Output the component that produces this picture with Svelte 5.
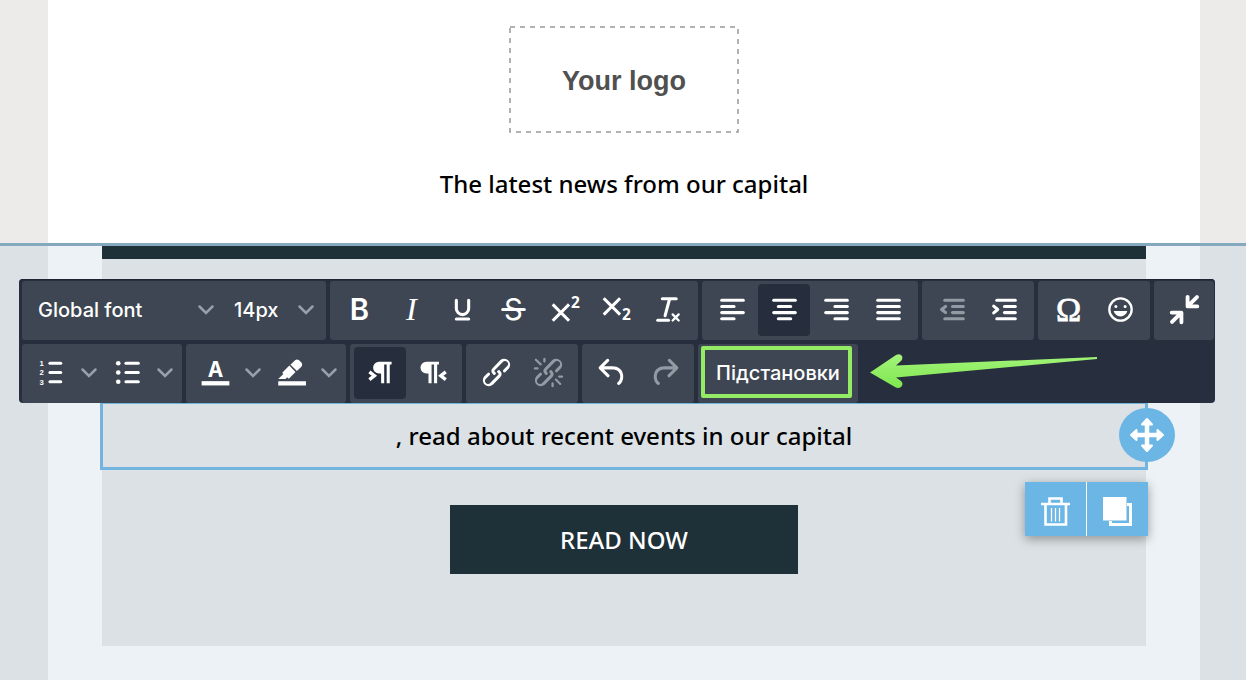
<script>
  const bar = (x1, x2, y) => `<path d="M${x1} ${y}H${x2}" />`;
  const stroked = (content) =>
    `<g fill="none" stroke="currentColor" stroke-width="2" stroke-linecap="round" stroke-linejoin="round">${content}</g>`;
  const glyph = (char, x, y, size, family = "Inter, sans-serif", weight = 400, style = "normal") =>
    `<text x="${x}" y="${y}" font-size="${size}" font-family="${family}" font-weight="${weight}" font-style="${style}" text-anchor="middle">${char}</text>`;

  const chain =
    '<path d="M6.2 12.3a1 1 0 0 1 1.4 1.4l-2.1 2a2 2 0 1 0 2.7 2.8l4.8-4.8a1 1 0 0 0 0-1.4 1 1 0 1 1 1.4-1.3 2.9 2.9 0 0 1 0 4L9.6 20a3.9 3.9 0 0 1-5.5-5.5l2-2zm11.6-.6a1 1 0 0 1-1.4-1.4l2-2a2 2 0 1 0-2.6-2.8L11 10.3a1 1 0 0 0 0 1.4A1 1 0 1 1 9.6 13a2.9 2.9 0 0 1 0-4L14.4 4a3.9 3.9 0 0 1 5.5 5.5l-2 2z" />';
  const undo =
    '<path d="M6.4 8H12c3.7 0 6.2 2 6.8 5.1.6 2.7-.4 5.6-2.3 6.8a1 1 0 0 1-1-1.8c1.1-.6 1.8-2.7 1.4-4.6-.5-2.1-2.1-3.5-4.9-3.5H6.4l3.3 3.3a1 1 0 1 1-1.4 1.4l-5-5a1 1 0 0 1 0-1.4l5-5a1 1 0 0 1 1.4 1.4L6.4 8z" />';
  const pilcrow = "M11 5h8.2v1.8H18V19h-2V6.8h-1.6V19h-2v-6.4H11a3.8 3.8 0 0 1 0-7.6z";

  const icons = {
    bold: glyph("B", 12, 18.8, 19, "Inter, sans-serif", 600),
    italic: glyph("I", 12, 18.8, 21, "Liberation Serif, serif", 400, "italic"),
    underline: stroked('<path d="M8 6v5.3a4 4 0 0 0 8 0V6" />' + bar(8, 16, 18.2)),
    strike: glyph("S", 12, 18.8, 19, "Inter, sans-serif") + stroked(bar(5, 19, 12)),
    superscript:
      '<path d="M15 9.4 10.4 14l4.6 4.6-1.4 1.4L9 15.4 4.4 20 3 18.6 7.6 14 3 9.4 4.4 8 9 12.6 13.6 8z" />' +
      glyph("2", 18.4, 11, 10, "Open Sans, sans-serif", 700),
    subscript:
      '<path d="m10.4 10 4.6 4.6-1.4 1.4L9 11.4 4.4 16 3 14.6 7.6 10 3 5.4 4.4 4 9 8.6 13.6 4 15 5.4z" />' +
      glyph("2", 18.5, 19, 10, "Open Sans, sans-serif", 700),
    clear: stroked(
      bar(8, 17, 5) +
        bar(5, 12, 19) +
        '<path d="M12.6 5.5 9.8 16" /><path d="m14.7 15.2 3.9 3.9m0-3.9-3.9 3.9" stroke-width="1.5" />'
    ),
    left: stroked(bar(5, 19, 6) + bar(5, 13, 10) + bar(5, 19, 14) + bar(5, 13, 18)),
    center: stroked(bar(5, 19, 6) + bar(8, 16, 10) + bar(5, 19, 14) + bar(8, 16, 18)),
    right: stroked(bar(5, 19, 6) + bar(11, 19, 10) + bar(5, 19, 14) + bar(11, 19, 18)),
    justify: stroked(bar(5, 19, 6) + bar(5, 19, 10) + bar(5, 19, 14) + bar(5, 19, 18)),
    outdent: stroked(
      bar(7, 19, 6) + bar(12, 19, 10) + bar(12, 19, 14) + bar(7, 19, 18) + '<path d="m7.5 10-2.6 2 2.6 2" />'
    ),
    indent: stroked(
      bar(7, 19, 6) + bar(12, 19, 10) + bar(12, 19, 14) + bar(7, 19, 18) + '<path d="m5 9.8 2.6 2.2L5 14.2" />'
    ),
    omega: `<g stroke="currentColor" stroke-width="0.5">${glyph("Ω", 12, 19.5, 22, "Liberation Serif, serif")}</g>`,
    smile:
      '<path d="M9 11a1 1 0 1 0 0-2 1 1 0 0 0 0 2zm6 0a1 1 0 1 0 0-2 1 1 0 0 0 0 2zm-3 5.5c2.1 0 4-1.5 4.4-3.5H7.6c.5 2 2.3 3.5 4.4 3.5zM12 4a8 8 0 1 0 0 16 8 8 0 0 0 0-16zm0 14.5a6.5 6.5 0 1 1 0-13 6.5 6.5 0 0 1 0 13z" />',
    collapse:
      '<path d="M14 3.8V10h6.3M14.5 9.5l5.6-5.6M3.7 14H10v6.3M9.5 14.5l-5.6 5.6" fill="none" stroke="currentColor" stroke-width="2.5" stroke-linecap="round" stroke-linejoin="round" />',
    ordered:
      stroked(bar(11, 18, 6) + bar(11, 18, 12) + bar(11, 18, 18)) +
      glyph("1", 5.6, 7.8, 5, "Liberation Sans, sans-serif", 700) +
      glyph("2", 5.6, 13.8, 5, "Liberation Sans, sans-serif", 700) +
      glyph("3", 5.6, 19.8, 5, "Liberation Sans, sans-serif", 700),
    bullets:
      stroked(bar(11, 19, 6) + bar(11, 19, 12) + bar(11, 19, 18)) +
      '<circle cx="6" cy="6" r="1.5" /><circle cx="6" cy="12" r="1.5" /><circle cx="6" cy="18" r="1.5" />',
    color: glyph("A", 12, 15.2, 13.5, "Inter, sans-serif", 700) + '<path d="M3 17.6h18v2.8H3z" />',
    highlight:
      '<path d="M3 17.6h18v2.8H3zM7.7 16.2H3l3.3-3.3-.7-.8 4.6-4.6 4 4.1-4 4.2c-.2.2-.6.2-.8 0l-.6-.7zM12.3 8.3 10.9 7l3-2.9a2 2 0 0 1 2.6 0L18 5.5c.7.7.7 2 0 2.7l-2.9 2.9z" transform="translate(.4)" />',
    ltr:
      `<path d="${pilcrow}" />` +
      '<path d="m4.8 11.600 3.200 2.500-3.200 2.500" fill="none" stroke="currentColor" stroke-width="2.2" />',
    rtl:
      `<path d="${pilcrow}" transform="translate(-3)" />` +
      '<path d="m20.600 11.600-3.200 2.500 3.200 2.500" fill="none" stroke="currentColor" stroke-width="2.2" />',
    link: chain,
    unlink:
      chain +
      '<path d="M7.6 6.3a.8.8 0 0 1-1 1.1L3.3 4.2a.7.7 0 1 1 1-1zM5.1 8.6a.8.8 0 0 1 0 1.5H3a.8.8 0 0 1 0-1.5zm5-3.5a.8.8 0 0 1-1.5 0V3a.8.8 0 0 1 1.5 0zm6 11.8a.8.8 0 0 1 1-1l3.2 3.2a.8.8 0 0 1-1 1zm-2.2 2a.8.8 0 0 1 1.5 0V21a.8.8 0 0 1-1.5 0zm5-3.5a.7.7 0 1 1 0-1.5H21a.8.8 0 0 1 0 1.5z" />',
    undo,
    redo: `<g transform="matrix(-1 0 0 1 24 0)">${undo}</g>`,
  };

  const formats = [
    ["bold", "Bold"],
    ["italic", "Italic"],
    ["underline", "Underline"],
    ["strike", "Strikethrough"],
    ["superscript", "Superscript"],
    ["subscript", "Subscript"],
    ["clear", "Clear formatting"],
  ];
  const alignments = ["left", "center", "right", "justify"];

  let align = $state("center");
  let direction = $state("ltr");
  let font = $state("Global font");
  let size = $state("14px");
</script>

{#snippet icon(name)}
  <svg class="icon" viewBox="0 0 24 24" aria-hidden="true">{@html icons[name]}</svg>
{/snippet}

{#snippet chevron()}
  <svg class="chevron" viewBox="0 0 18 12" aria-hidden="true">
    <path d="M2.5 2.5 9 9l6.5-6.5" />
  </svg>
{/snippet}

{#snippet tool(name, label, disabled = false)}
  <button type="button" class="tool" aria-label={label} {disabled}>{@render icon(name)}</button>
{/snippet}

{#snippet split(name, label)}
  <button type="button" class="tool split-main" aria-label={label}>{@render icon(name)}</button>
  <button type="button" class="tool split-more" aria-label="{label} options">{@render chevron()}</button>
{/snippet}

<div class="page">
  <header>
    <div class="sheet">
      <svg class="logo" viewBox="0 0 230 107" role="img" aria-label="Your logo">
        <rect x="1" y="1" width="228" height="105" />
        <text x="115" y="64">Your logo</text>
      </svg>
      <p class="text">The latest news from our capital</p>
    </div>
  </header>

  <section class="selected">
    <div class="sheet">
      <div class="content">
        <div class="strip"></div>
        <div class="block">
          <p class="text">, read about recent events in our capital</p>
          <button type="button" class="move" aria-label="Move">
            <svg viewBox="0 0 36 36" aria-hidden="true">
              <path d="M18 6v24M6 18h24" />
              <path class="head" d="m18 2 5 5.5h-10zM18 34l5-5.5h-10zM2 18l5.500-5v10zM34 18l-5.500-5v10z" />
            </svg>
          </button>
          <div class="actions">
            <button type="button" aria-label="Delete">
              <svg viewBox="0 0 30 30" aria-hidden="true">
                <path d="M0 7h29M8.500 6.500v-5h12v5M4.500 7v20.500h20.500V7" stroke-width="2.600" />
                <path d="M10.500 11v13.500M14.500 11v13.500M18.500 11v13.500" stroke-width="1.300" />
              </svg>
            </button>
            <button type="button" aria-label="Duplicate">
              <svg viewBox="0 0 30 30" aria-hidden="true">
                <path d="M24 7.500h3.500v20h-20V24" stroke-width="3" />
                <path d="M0 0h23.500v23.500H0z" fill="currentColor" stroke="none" />
              </svg>
            </button>
          </div>
        </div>
        <a class="cta" href="#read">READ NOW</a>
      </div>
    </div>
  </section>

  <div class="toolbar" role="toolbar" aria-label="Text formatting">
    <div class="row">
      <div class="group fonts">
        <label class="picker family">
          <select aria-label="Font" bind:value={font}>
            <option>Global font</option>
            <option>Arial</option>
          </select>
          {@render chevron()}
        </label>
        <label class="picker">
          <select aria-label="Font size" bind:value={size}>
            <option>14px</option>
            <option>16px</option>
          </select>
          {@render chevron()}
        </label>
      </div>
      <div class="group formats">
        {#each formats as [name, label]}
          {@render tool(name, label)}
        {/each}
      </div>
      <div class="group aligns">
        {#each alignments as name}
          <button
            type="button"
            class="tool"
            class:active={align === name}
            aria-label="Align {name}"
            aria-pressed={align === name}
            onclick={() => (align = name)}
          >
            {@render icon(name)}
          </button>
        {/each}
      </div>
      <div class="group pair">
        {@render tool("outdent", "Decrease indent", true)}
        {@render tool("indent", "Increase indent")}
      </div>
      <div class="group pair">
        {@render tool("omega", "Special character")}
        {@render tool("smile", "Emoji")}
      </div>
      <div class="group rest">
        {@render tool("collapse", "Collapse toolbar")}
      </div>
    </div>

    <div class="row">
      <div class="group wide">
        {@render split("ordered", "Numbered list")}
        {@render split("bullets", "Bullet list")}
      </div>
      <div class="group wide">
        {@render split("color", "Text color")}
        {@render split("highlight", "Highlight color")}
      </div>
      <div class="group pair">
        {#each ["ltr", "rtl"] as name}
          <button
            type="button"
            class="tool"
            class:active={direction === name}
            aria-label="Direction {name}"
            aria-pressed={direction === name}
            onclick={() => (direction = name)}
          >
            {@render icon(name)}
          </button>
        {/each}
      </div>
      <div class="group pair">
        {@render tool("link", "Insert link")}
        {@render tool("unlink", "Remove link", true)}
      </div>
      <div class="group pair">
        {@render tool("undo", "Undo")}
        {@render tool("redo", "Redo", true)}
      </div>
      <div class="group wide callout">
        <button type="button" class="tool">Підстановки</button>
        <svg class="arrow" viewBox="0 0 232 36" aria-hidden="true">
          <defs>
            <linearGradient id="arrow-fill" x1="0" y1="0" x2="0" y2="1">
              <stop offset="0" stop-color="#a4f47a" />
              <stop offset="1" stop-color="#7ee74f" />
            </linearGradient>
          </defs>
          <path
            d="M1 20.500 27 3q4-2 6 1 1 3-1 5l-5 4.500L228 5v2L27 25.500l5 3.500q3 3 0 6-3 2-6 0z"
            fill="url(#arrow-fill)"
          />
        </svg>
      </div>
    </div>
  </div>
</div>

<style>
  :global(body) {
    margin: 0;
  }

  .page {
    display: flex;
    flex-direction: column;
    min-height: 100vh;
    position: relative;
    font-family: "Noto Sans", sans-serif;
  }

  header,
  .selected {
    padding: 0 46px 0 48px;
  }

  header {
    background: #ecebe9;
    border-bottom: 3px solid #84a8bd;
  }

  header .sheet {
    align-items: center;
    background: white;
    display: flex;
    flex-direction: column;
    gap: 35px;
    padding: 26px 0 43px;
  }

  .logo {
    height: 107px;
    width: 230px;
  }

  .logo rect {
    fill: none;
    stroke: #999;
    stroke-dasharray: 5 5;
    stroke-width: 1.5;
  }

  .logo text {
    fill: #505050;
    font-family: "Liberation Sans", Arial, sans-serif;
    font-size: 27px;
    font-weight: 700;
    text-anchor: middle;
  }

  .text {
    color: #000;
    font-size: 24px;
    font-weight: 500;
    line-height: 32px;
    margin: 0;
    text-align: center;
  }

  .selected {
    background: #dbe1e4;
    display: flex;
    flex: 1;
  }

  .selected .sheet {
    background: #ecf2f5;
    flex: 1;
    padding: 0 54px 34px;
  }

  .content {
    align-items: center;
    background: #dbe1e4;
    display: flex;
    flex-direction: column;
    padding-bottom: 72px;
  }

  .strip {
    align-self: stretch;
    background: #1f3138;
    height: 13px;
    margin-bottom: 142px;
  }

  .block {
    align-self: stretch;
    border: 3px solid #72b4de;
    margin: 0 -2px 35px;
    padding: 16px 0 15px;
    position: relative;
  }

  .move,
  .actions button {
    background: #6bb6e4;
    border: 0;
    color: white;
    cursor: pointer;
    display: grid;
    padding: 0;
    place-items: center;
  }

  .move {
    border-radius: 50%;
    height: 54px;
    position: absolute;
    right: -30px;
    top: 4px;
    width: 56px;
  }

  .move svg {
    height: 36px;
    width: 36px;
  }

  .move path {
    fill: none;
    stroke: currentColor;
    stroke-width: 4.5;
  }

  .move .head {
    fill: currentColor;
    stroke-linejoin: round;
    stroke-width: 2;
  }

  .actions {
    box-shadow: 0 3px 10px rgba(0, 0, 0, 0.35);
    display: flex;
    position: absolute;
    right: -3px;
    top: 78px;
  }

  .actions button {
    height: 54px;
    padding-top: 6px;
    width: 61px;
  }

  .actions button + button {
    border-left: 1px solid white;
    width: 62px;
  }

  .actions svg {
    fill: none;
    height: 30px;
    stroke: currentColor;
    width: 30px;
  }

  .cta {
    background: #1f3138;
    color: white;
    font-size: 24px;
    font-weight: 500;
    line-height: 69px;
    text-align: center;
    text-decoration: none;
    width: 348px;
  }

  .toolbar {
    background: #272f3e;
    border-radius: 4px;
    box-shadow: inset 0 1px #1c2431;
    box-sizing: border-box;
    display: flex;
    flex-direction: column;
    gap: 4px;
    left: 19px;
    padding: 2px 1px 0 3px;
    position: absolute;
    right: 31px;
    top: 279px;
  }

  .row {
    display: flex;
    gap: 4px;
  }

  .group {
    align-items: center;
    background: #3d4652;
    border-radius: 3px;
    box-sizing: border-box;
    display: flex;
    height: 59px;
    padding: 0 4px 2px;
  }

  .fonts {
    width: 304px;
  }

  .formats {
    width: 368px;
  }

  .aligns {
    width: 216px;
  }

  .pair {
    width: 112px;
  }

  .wide {
    width: 160px;
  }

  .rest {
    flex: 1;
  }

  .tool {
    align-items: center;
    background: none;
    border: 0;
    border-radius: 4px;
    color: white;
    cursor: pointer;
    display: flex;
    flex: 1;
    font-family: Inter, sans-serif;
    font-size: 20px;
    font-weight: 500;
    height: 52px;
    justify-content: center;
    min-width: 0;
    padding: 0;
  }

  .tool.active {
    background: #262e3d;
  }

  .tool:disabled {
    color: #929aa3;
    cursor: default;
  }

  .split-main {
    flex: 0 0 50px;
  }

  .split-more {
    flex: 0 0 26px;
  }

  .icon {
    fill: currentColor;
    flex: none;
    height: 37px;
    overflow: visible;
    width: 37px;
  }

  .chevron {
    fill: none;
    height: 12px;
    stroke: #98a0a9;
    stroke-linecap: round;
    stroke-width: 2.5;
    width: 18px;
  }

  .picker {
    align-items: center;
    display: grid;
    flex: 1;
  }

  .picker.family {
    flex: 0 0 196px;
  }

  .picker select,
  .picker .chevron {
    grid-area: 1 / 1;
  }

  .picker select {
    appearance: none;
    background: none;
    border: 0;
    color: white;
    font-family: Inter, sans-serif;
    font-size: 20px;
    font-weight: 500;
    height: 52px;
    padding: 0 24px 0 12px;
    width: 100%;
  }

  .picker .chevron {
    justify-self: end;
    margin-right: 7px;
    pointer-events: none;
  }

  .callout {
    position: relative;
  }

  .callout::after {
    border: 4px solid #94ec65;
    border-radius: 2px;
    box-sizing: border-box;
    content: "";
    inset: 2px 6px 5px 3px;
    pointer-events: none;
    position: absolute;
  }

  .arrow {
    height: 36px;
    left: 171px;
    pointer-events: none;
    position: absolute;
    top: 8px;
    width: 232px;
  }
</style>
